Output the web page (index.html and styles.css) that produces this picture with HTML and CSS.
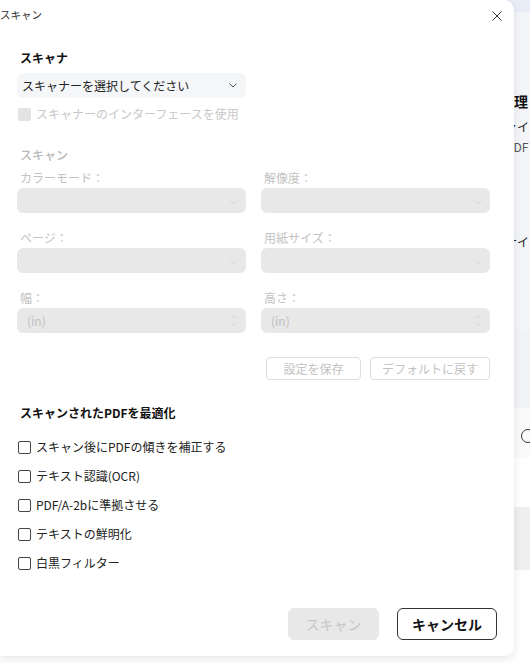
FILE: index.html
```html
<!DOCTYPE html>
<html lang="ja">
<head>
<meta charset="utf-8">
<link rel="stylesheet" href="styles.css">
</head>
<body>
<div class="app">
  <div class="app-top"></div>
  <div class="app-panel">
    <div class="app-heading">管理</div>
    <div class="app-line">ファイ</div>
    <div class="app-sub">PDF</div>
    <div class="app-line app-line2">サイ</div>
  </div>
  <div class="app-band1"></div>
  <div class="app-band2"><span class="app-search"></span></div>
  <div class="app-band3"></div>
  <div class="app-band4"></div>
  <div class="app-band5"></div>
</div>

<div class="dialog">
  <div class="titlebar">
    <span class="title">スキャン</span>
    <svg class="close" width="10" height="10" viewBox="0 0 10 10"><path d="M0.5 0.5L9.5 9.5M9.5 0.5L0.5 9.5" stroke="#333" stroke-width="1" fill="none"/></svg>
  </div>
  <div class="form">
    <div class="sec-title first">スキャナ</div>
    <div class="select">
      <span>スキャナーを選択してください</span>
      <svg class="chev" width="8" height="5" viewBox="0 0 8 5"><path d="M0.5 0.5L4 4L7.5 0.5" stroke="#555" stroke-width="1" fill="none"/></svg>
    </div>
    <div class="check-row disabled">
      <span class="box box-disabled"></span><span>スキャナーのインターフェースを使用</span>
    </div>
    <div class="sec-title dim">スキャン</div>
    <div class="grid">
      <div class="field">
        <div class="label">カラーモード：</div>
        <div class="input"><svg class="chev" width="8" height="5" viewBox="0 0 8 5"><path d="M0.5 0.5L4 4L7.5 0.5" stroke="#d6d6d6" stroke-width="1" fill="none"/></svg></div>
      </div>
      <div class="field">
        <div class="label">解像度：</div>
        <div class="input"><svg class="chev" width="8" height="5" viewBox="0 0 8 5"><path d="M0.5 0.5L4 4L7.5 0.5" stroke="#d6d6d6" stroke-width="1" fill="none"/></svg></div>
      </div>
      <div class="field">
        <div class="label">ページ：</div>
        <div class="input"><svg class="chev" width="8" height="5" viewBox="0 0 8 5"><path d="M0.5 0.5L4 4L7.5 0.5" stroke="#d6d6d6" stroke-width="1" fill="none"/></svg></div>
      </div>
      <div class="field">
        <div class="label">用紙サイズ：</div>
        <div class="input"><svg class="chev" width="8" height="5" viewBox="0 0 8 5"><path d="M0.5 0.5L4 4L7.5 0.5" stroke="#d6d6d6" stroke-width="1" fill="none"/></svg></div>
      </div>
      <div class="field">
        <div class="label">幅：</div>
        <div class="input"><span class="unit">(in)</span><svg class="spin" width="8" height="13" viewBox="0 0 8 13"><path d="M1 4.5L4 1.5L7 4.5M1 8.5L4 11.5L7 8.5" stroke="#d0d0d0" stroke-width="1" fill="none"/></svg></div>
      </div>
      <div class="field">
        <div class="label">高さ：</div>
        <div class="input"><span class="unit">(in)</span><svg class="spin" width="8" height="13" viewBox="0 0 8 13"><path d="M1 4.5L4 1.5L7 4.5M1 8.5L4 11.5L7 8.5" stroke="#d0d0d0" stroke-width="1" fill="none"/></svg></div>
      </div>
    </div>
    <div class="btn-row">
      <span class="sbtn w1">設定を保存</span>
      <span class="sbtn w2">デフォルトに戻す</span>
    </div>
    <div class="sec-title opt">スキャンされたPDFを最適化</div>
    <div class="opts">
      <div class="check-row"><span class="box"></span><span>スキャン後にPDFの傾きを補正する</span></div>
      <div class="check-row"><span class="box"></span><span>テキスト認識(OCR)</span></div>
      <div class="check-row"><span class="box"></span><span>PDF/A-2bに準拠させる</span></div>
      <div class="check-row"><span class="box"></span><span>テキストの鮮明化</span></div>
      <div class="check-row"><span class="box"></span><span>白黒フィルター</span></div>
    </div>
  </div>
  <div class="footer">
    <span class="fbtn scan">スキャン</span>
    <span class="fbtn cancel">キャンセル</span>
  </div>
</div>
</body>
</html>
```
FILE: styles.css
```css
* { box-sizing: border-box; }
html, body {
  margin: 0;
  padding: 0;
  width: 530px;
  height: 663px;
  overflow: hidden;
  font-family: "Noto Sans CJK JP", "Noto Sans", sans-serif;
  color: #222;
  background: #fbfbfb;
}
.app {
  width: 530px;
  height: 663px;
  display: flex;
  flex-direction: column;
}
.app-top { height: 12px; background: #e8edf7; }
.app-panel {
  height: 318px;
  background: #f4f5f8;
  padding-top: 80px;
  white-space: nowrap;
}
.app-heading { font-size: 14px; font-weight: 700; line-height: 18px; color: #111; padding-left: 500px; }
.app-line { font-size: 12px; line-height: 16px; margin-top: 9px; color: #222; padding-left: 493px; }
.app-sub { font-size: 12px; line-height: 16px; margin-top: 4px; color: #555; padding-left: 506px; }
.app-line2 { margin-top: 79px; padding-left: 505px; }
.app-band1 { height: 78px; background: #f2f3f6; }
.app-band2 { height: 50px; background: #fafafa; padding-left: 521px; padding-top: 21px; }
.app-search {
  display: block;
  width: 14px; height: 14px;
  border: 1.5px solid #333;
  border-radius: 50%;
}
.app-band3 { height: 49px; background: #fff; }
.app-band4 { height: 63px; background: #efefef; }
.app-band5 { flex: 1; background: #fff; }

.dialog {
  position: absolute;
  left: 0;
  top: 0;
  width: 514px;
  height: 656px;
  background: #fff;
  border-radius: 0 10px 10px 0;
  box-shadow: 0 3px 10px rgba(0,0,0,0.10);
  display: flex;
  flex-direction: column;
}
.titlebar {
  height: 30px;
  display: flex;
  align-items: center;
  justify-content: space-between;
  padding: 0 12px 0 0;
}
.title { font-size: 10.5px; line-height: 14px; color: #333; }
.close { display: block; margin-top: 2px; }

.form {
  width: 490px;
  padding-left: 17px;
}
.sec-title {
  font-size: 12px;
  font-weight: 700;
  line-height: 20px;
  height: 20px;
  padding-left: 3px;
  color: #111;
}
.sec-title.first { margin-top: 18px; }
.sec-title.dim { margin-top: 21px; color: #b9b9b9; font-weight: 500; }
.sec-title.opt { margin-top: 23px; }

.select {
  margin-top: 5px;
  width: 229px;
  height: 25px;
  border-radius: 6px;
  background: #f5f6f8;
  display: flex;
  align-items: center;
  justify-content: space-between;
  padding: 0 9px 0 5px;
  font-size: 12px;
  color: #222;
}
.chev { display: block; }

.check-row {
  height: 20px;
  display: flex;
  align-items: center;
  gap: 5px;
  font-size: 12px;
  line-height: 20px;
  color: #222;
  padding-left: 1px;
}
.check-row.disabled { margin-top: 6px; color: #c8c8c8; }
.box {
  width: 13px;
  height: 13px;
  border: 1px solid #444;
  border-radius: 2px;
  background: #fff;
  flex: none;
}
.box.box-disabled { border: none; background: #e3e3e3; }

.grid {
  margin-top: 3px;
  display: grid;
  grid-template-columns: 229px 229px;
  column-gap: 15px;
  row-gap: 15px;
}
.label {
  height: 20px;
  line-height: 20px;
  font-size: 12px;
  color: #c3c3c3;
  padding-left: 3px;
}
.input {
  height: 25px;
  border-radius: 6px;
  background: #e8e8e8;
  display: flex;
  align-items: center;
  justify-content: space-between;
  padding: 0 8px 0 10px;
}
.input .chev { margin-left: auto; margin-top: 3px; }
.unit { font-size: 12px; color: #c0c0c0; }
.spin { display: block; }

.btn-row {
  margin-top: 24px;
  display: flex;
  justify-content: flex-end;
  gap: 9px;
}
.sbtn {
  height: 23px;
  border: 1px solid #dedede;
  border-radius: 4px;
  background: #fff;
  font-size: 12px;
  line-height: 21px;
  color: #c2c2c2;
  text-align: center;
}
.sbtn.w1 { width: 95px; }
.sbtn.w2 { width: 120px; }

.opts {
  margin-top: 14px;
  display: flex;
  flex-direction: column;
  gap: 9px;
}

.footer {
  margin-top: 35px;
  width: 497px;
  display: flex;
  justify-content: flex-end;
  gap: 18px;
}
.fbtn {
  height: 32px;
  border-radius: 6px;
  font-size: 14px;
  line-height: 30px;
  text-align: center;
}
.fbtn.scan {
  width: 91px;
  background: #e8e8e8;
  border: 1px solid #e8e8e8;
  color: #c6c6c6;
}
.fbtn.cancel {
  width: 100px;
  border: 1px solid #333;
  background: #fff;
  color: #111;
  font-weight: 700;
}
```
